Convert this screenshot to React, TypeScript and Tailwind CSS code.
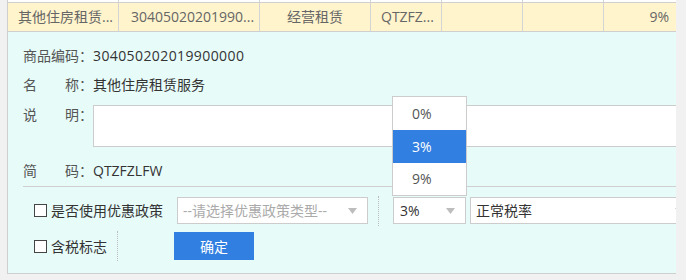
import React from "react";

const Arrow = () => (
  <svg width="9" height="6" viewBox="0 0 9 6" className="shrink-0">
    <polygon points="0,0 9,0 4.5,6" fill="#bdbdbd" />
  </svg>
);

const Checkbox = () => (
  <span className="w-[13px] h-[13px] border border-[#444] bg-white shrink-0 block" />
);

export default function App() {
  const cols = [
    { w: "w-[111px]", text: "其他住房租赁...", cls: "pl-[10px] text-left" },
    { w: "w-[141px]", text: "30405020201990...", cls: "pl-[12px] text-left" },
    { w: "w-[111px]", text: "经营租赁", cls: "text-center" },
    { w: "w-[71px]", text: "QTZFZ...", cls: "pl-[10px] text-left" },
    { w: "w-[81px]", text: "", cls: "" },
    { w: "w-[81px]", text: "", cls: "" },
    { w: "w-[72px]", text: "9%", cls: "text-right pr-[7px]" },
  ];
  return (
    <div className="relative w-[686px] h-[280px] bg-[#f1f1f1] overflow-hidden font-['Open_Sans','Noto_Sans_CJK_SC',sans-serif] text-[14px]">
      <div className="ml-[7px] w-[669px] border-l border-b border-[#cfcfcf] overflow-hidden">
        {/* previous row remnant */}
        <div className="flex h-[2px] bg-white">
          {cols.map((c, i) => (
            <div key={i} className={`${c.w} shrink-0 h-full ${i < 6 ? "border-r border-[#d4d4d4]" : ""}`} />
          ))}
        </div>
        {/* current row */}
        <div className="flex h-[30px] bg-[#fff4cc] border-t border-b border-[#cfcfcf] text-[#666]">
          {cols.map((c, i) => (
            <div
              key={i}
              className={`${c.w} shrink-0 h-full leading-[28px] whitespace-nowrap overflow-hidden ${c.cls} ${i < 6 ? "border-r border-[#d4d4d4]" : ""}`}
            >
              {c.text}
            </div>
          ))}
        </div>
        {/* detail panel */}
        <div className="bg-[#e7fbf9] h-[241px] pl-[15px] pt-[14px] text-[#333] overflow-hidden">
          <div className="flex h-[20px] leading-[20px]">
            <span className="w-[70px] shrink-0 text-[#555]">商品编码：</span>
            <span className="tracking-[0.4px]">304050202019900000</span>
          </div>
          <div className="flex h-[20px] leading-[20px] mt-[9px]">
            <span className="w-[70px] shrink-0 flex text-[#555]">
              <span>名</span>
              <span className="ml-[28px]">称：</span>
            </span>
            <span>其他住房租赁服务</span>
          </div>
          <div className="flex mt-[10px]">
            <span className="w-[70px] shrink-0 flex leading-[20px] text-[#555]">
              <span>说</span>
              <span className="ml-[28px]">明：</span>
            </span>
            <div className="w-[600px] h-[42px] bg-white border border-[#cccccc] shrink-0" />
          </div>
          <div className="flex h-[20px] leading-[20px] mt-[14px]">
            <span className="w-[70px] shrink-0 flex text-[#555]">
              <span>简</span>
              <span className="ml-[28px]">码：</span>
            </span>
            <span>QTZFZLFW</span>
          </div>
          <div className="mt-[5px] border-t border-[#cfcfcf]" />
          {/* bottom row 1 */}
          <div className="flex items-center mt-[10px] h-[27px]">
            <div className="flex items-center ml-[11px] w-[143px] shrink-0">
              <Checkbox />
              <span className="ml-[4px] whitespace-nowrap">是否使用优惠政策</span>
            </div>
            <div className="w-[191px] h-[27px] bg-white border border-[#cccccc] flex items-center pl-[5px] pr-[10px] shrink-0">
              <span className="flex-1 text-[14px] text-[#aaa] whitespace-nowrap overflow-hidden">--请选择优惠政策类型--</span>
              <Arrow />
            </div>
            <div className="ml-[10px] h-[30px] border-l border-dotted border-[#bbb] shrink-0" />
            <div className="ml-[14px] w-[73px] h-[27px] bg-white border border-[#cccccc] flex items-center pl-[6px] pr-[10px] shrink-0">
              <span className="flex-1">3%</span>
              <Arrow />
            </div>
            <div className="ml-[4px] w-[215px] h-[27px] bg-white border border-[#cccccc] flex items-center pl-[5px] shrink-0">
              <span className="flex-1">正常税率</span>
              <Arrow />
            </div>
          </div>
          {/* bottom row 2 */}
          <div className="flex items-center mt-[8px] h-[28px]">
            <div className="flex items-center ml-[11px] w-[83px] shrink-0">
              <Checkbox />
              <span className="ml-[4px] whitespace-nowrap">含税标志</span>
            </div>
            <div className="h-[30px] border-l border-dotted border-[#bbb] shrink-0" />
            <button className="ml-[56px] w-[80px] h-[28px] bg-[#3180e1] text-white text-[14px] shrink-0">确定</button>
          </div>
        </div>
      </div>
      {/* dropdown overlay */}
      <div className="absolute left-[392px] top-[96px] w-[75px] h-[100px] bg-white border border-[#cccccc] text-[#555]">
        <div className="h-[33px] leading-[33px] pl-[19px]">0%</div>
        <div className="h-[33px] leading-[33px] pl-[19px] bg-[#3180e1] text-white">3%</div>
        <div className="h-[32px] leading-[32px] pl-[19px]">9%</div>
      </div>
    </div>
  );
}
